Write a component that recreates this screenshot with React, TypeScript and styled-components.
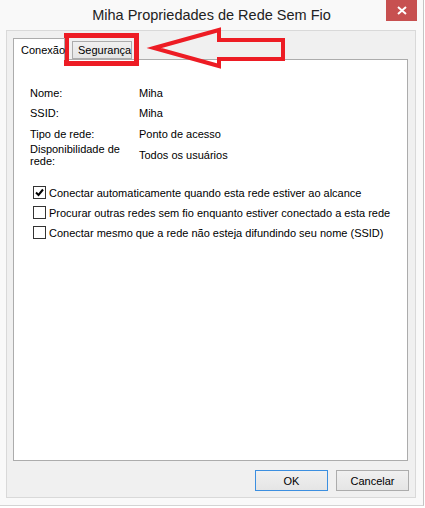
import React from "react";
import styled, { createGlobalStyle } from "styled-components";

const Global = createGlobalStyle`
  html, body { margin: 0; padding: 0; background: #ffffff; }
  body { font-family: "Liberation Sans", Arial, sans-serif; }
`;

const Window = styled.div`
  position: relative;
  width: 423px;
  height: 505px;
  background: #f9f9f9;
  border-right: 1px solid #c4c4c4;
  border-bottom: 1px solid #d4d4d4;
  display: flex;
  flex-direction: column;
`;

const TitleBar = styled.div`
  height: 30px;
  display: flex;
  align-items: center;
  justify-content: center;
  position: relative;
`;

const Title = styled.div`
  font-family: "Liberation Sans", Arial, sans-serif;
  font-size: 14.5px;
  color: #222;
  margin-top: -1px;
`;

const CloseBtn = styled.div`
  position: absolute;
  top: 0;
  right: 6px;
  width: 31px;
  height: 21px;
  background: #c75050;
  color: #fff;
  display: flex;
  align-items: center;
  justify-content: center;
`;

const Client = styled.div`
  margin: 0 7px 0 6px;
  height: 468px;
  box-sizing: border-box;
  background: #f0f0f0;
  border: 1px solid #d9d9d9;
  padding: 7px 7px 0 6px;
  display: flex;
  flex-direction: column;
`;

const TabStrip = styled.div`
  display: flex;
  align-items: flex-end;
  height: 21px;
  position: relative;
  z-index: 1;
`;

const Tab = styled.div<{ $active?: boolean }>`
  box-sizing: border-box;
  font-size: 11px;
  color: #000;
  display: flex;
  align-items: center;
  white-space: nowrap;
  padding: 0 ${(p) => (p.$active ? "7px" : "5px")};
  height: ${(p) => (p.$active ? "22px" : "18px")};
  margin-bottom: ${(p) => (p.$active ? "-1px" : "0")};
  background: ${(p) => (p.$active ? "#ffffff" : "linear-gradient(#f0f0f0, #e5e5e5)")};
  border: 1px solid #acacac;
  border-bottom: ${(p) => (p.$active ? "none" : "1px solid #acacac")};
  margin-left: ${(p) => (p.$active ? "0" : "7px")};
  width: ${(p) => (p.$active ? "52px" : "60px")};
`;

const Panel = styled.div`
  box-sizing: border-box;
  height: 402px;
  background: #ffffff;
  border: 1px solid #acacac;
  padding: 22px 0 0 16px;
  display: flex;
  flex-direction: column;
`;

const InfoGrid = styled.div`
  display: grid;
  grid-template-columns: 109px 1fr;
  font-size: 11px;
  color: #000;
`;

const Label = styled.div<{ $h: number }>`
  height: ${(p) => p.$h}px;
  display: flex;
  align-items: center;
  line-height: 12px;
  white-space: pre-line;
`;

const Checks = styled.div`
  margin-top: 20px;
  display: flex;
  flex-direction: column;
  gap: 7px;
  padding-left: 3px;
`;

const CheckRow = styled.div`
  display: flex;
  align-items: center;
  gap: 3px;
  font-size: 11px;
  color: #000;
  height: 13px;
  white-space: nowrap;
`;

const Box = styled.div`
  box-sizing: border-box;
  width: 13px;
  height: 13px;
  border: 1px solid #333;
  background: #fff;
  display: flex;
  align-items: center;
  justify-content: center;
  flex-shrink: 0;
`;

const Footer = styled.div`
  display: flex;
  justify-content: flex-end;
  gap: 8px;
  padding-top: 9px;
`;

const Button = styled.button<{ $default?: boolean }>`
  box-sizing: border-box;
  width: 73px;
  height: 21px;
  font-family: "Liberation Sans", Arial, sans-serif;
  font-size: 11px;
  color: #000;
  background: linear-gradient(#f0f0f0, #e5e5e5);
  border: 1px solid ${(p) => (p.$default ? "#3c8fe0" : "#acacac")};
  padding: 0;
  margin-right: ${(p) => (p.$default ? "0" : "-1px")};
`;

const Overlay = styled.svg`
  position: absolute;
  left: 0;
  top: 0;
  pointer-events: none;
`;

const rows: [string, string, number][] = [
  ["Nome:", "Miha", 21],
  ["SSID:", "Miha", 20],
  ["Tipo de rede:", "Ponto de acesso", 21],
  ["Disponibilidade de\nrede:", "Todos os usuários", 22],
];

const checks: [boolean, string][] = [
  [true, "Conectar automaticamente quando esta rede estiver ao alcance"],
  [false, "Procurar outras redes sem fio enquanto estiver conectado a esta rede"],
  [false, "Conectar mesmo que a rede não esteja difundindo seu nome (SSID)"],
];

export default function App() {
  return (
    <>
      <Global />
      <Window>
        <TitleBar>
          <Title>Miha Propriedades de Rede Sem Fio</Title>
          <CloseBtn>
            <svg width="10" height="9" viewBox="0 0 10 9">
              <path d="M1 1 L9 8 M9 1 L1 8" stroke="#fff" strokeWidth="2" />
            </svg>
          </CloseBtn>
        </TitleBar>
        <Client>
          <TabStrip>
            <Tab $active>Conexão</Tab>
            <Tab>Segurança</Tab>
          </TabStrip>
          <Panel>
            <InfoGrid>
              {rows.map(([l, v, h]) => (
                <React.Fragment key={l}>
                  <Label $h={h}>{l}</Label>
                  <Label $h={h}>{v}</Label>
                </React.Fragment>
              ))}
            </InfoGrid>
            <Checks>
              {checks.map(([c, t]) => (
                <CheckRow key={t}>
                  <Box>
                    {c && (
                      <svg width="9" height="9" viewBox="0 0 9 9">
                        <path d="M1 4.5 L3.5 7 L8 1.5" stroke="#000" strokeWidth="2" fill="none" />
                      </svg>
                    )}
                  </Box>
                  <span>{t}</span>
                </CheckRow>
              ))}
            </Checks>
          </Panel>
          <Footer>
            <Button $default>OK</Button>
            <Button>Cancelar</Button>
          </Footer>
        </Client>
        <Overlay width="425" height="80">
          <rect x="66.5" y="35.5" width="70" height="28" fill="none" stroke="#ed1c24" strokeWidth="5" />
          <path
            d="M154 48 L219 30 L219 40 L283 40 L283 59 L219 59 L219 66 Z"
            fill="none"
            stroke="#ed1c24"
            strokeWidth="4"
            strokeLinejoin="miter"
          />
        </Overlay>
      </Window>
    </>
  );
}
